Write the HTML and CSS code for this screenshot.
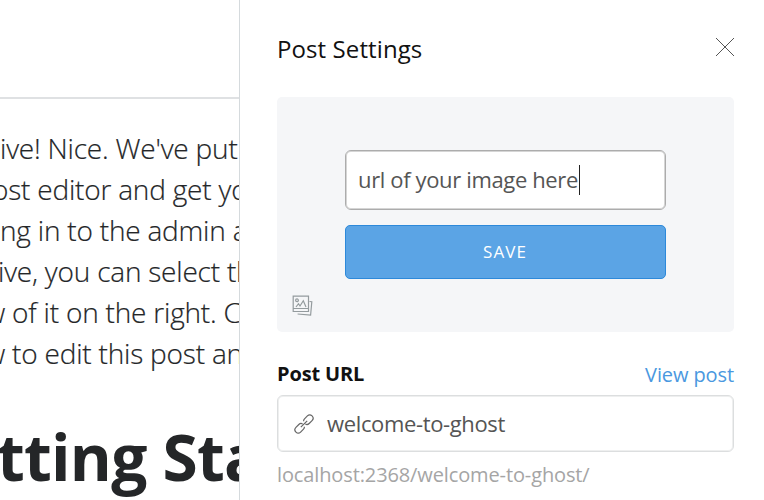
FILE: index.html
```html
<!DOCTYPE html>
<html lang="en">
<head>
<meta charset="utf-8">
<title>Post Settings</title>
<link rel="stylesheet" href="styles.css">
</head>
<body>
<main class="editor">
  <header class="editor-bar"></header>
  <article class="preview">
    <p class="copy">
      <span class="line line-a">ive! Nice. We've put</span>
      <span class="line line-b">ost editor and get yo</span>
      <span class="line line-c">ng in to the admin a</span>
      <span class="line line-d">ive, you can select th</span>
      <span class="line line-e">w of it on the right. C</span>
      <span class="line line-f">w to edit this post an</span>
    </p>
    <h1 class="heading">tting Sta</h1>
  </article>
</main>
<aside class="panel">
  <header class="panel-head">
    <h2 class="title">Post Settings</h2>
    <svg class="close" viewBox="0 0 20 20"><path d="M1 1L19 19M19 1L1 19"/></svg>
  </header>
  <section class="uploader">
    <div class="url-input"><span class="url-text">url of your image here</span><span class="caret"></span></div>
    <button class="save">SAVE</button>
    <svg class="image-icon" viewBox="0 0 22 22"><path d="M1.2 1.2h15.3v15.3H1.2zM1.2 13.5h15.3M4 12l2.5-3.3L8 11l3.3-5.3L14 12M17.500 6.500l2.300.2-1.200 13.500-13-1.200"/><circle cx="5" cy="5.3" r="1.4"/></svg>
  </section>
  <div class="label-row"><label class="label">Post URL</label><a class="view">View post</a></div>
  <div class="slug">
    <svg class="link-icon" viewBox="0 0 20 20"><g transform="rotate(-45 10 10)"><path d="M8.4 12.2a3.2 3.2 0 0 1-2.4 1.1H1.9a3.3 3.3 0 0 1 0-6.6H6a3.3 3.3 0 0 1 3.1 2.2M11.6 7.8A3.2 3.2 0 0 1 14 6.7h4.1a3.3 3.3 0 0 1 0 6.6H14a3.3 3.3 0 0 1-3.1-2.2M5.5 10h9"/></g></svg>
    <span class="slug-text">welcome-to-ghost</span>
  </div>
  <p class="hint">localhost:2368/welcome-to-ghost/</p>
</aside>
</body>
</html>
```
FILE: styles.css
```css
* { box-sizing: border-box; }
body {
  margin: 0;
  width: 764px;
  height: 500px;
  display: flex;
  overflow: hidden;
  background: #fff;
  font-family: "Open Sans", sans-serif;
}
h1, h2, p { margin: 0; font-weight: 400; }
svg { fill: none; display: block; overflow: visible; }
.editor { width: 239px; height: 500px; overflow: hidden; flex: none; }
.editor-bar { height: 99px; border-bottom: 2px solid #dfe1e3; }
.preview { padding-top: 29px; white-space: nowrap; color: #242628; }
.copy { font-size: 28px; line-height: 41px; font-weight: 300; letter-spacing: -0.2px; -webkit-text-stroke: 0.2px #242628; }
.line { display: block; }
.line-a { margin-left: 0; }
.line-b { margin-left: -8px; }
.line-c { margin-left: 0; }
.line-d { margin-left: -2px; }
.line-e { margin-left: -15px; }
.line-f { margin-left: -15px; }
.heading { margin: 39px 0 0 -3px; font-size: 64px; line-height: 88px; font-weight: 700; letter-spacing: -0.75px; }
.panel {
  width: 525px;
  height: 500px;
  flex: none;
  padding: 0 30px 0 37px;
  border-left: 1px solid #d5dadd;
}
.panel-head { height: 97px; display: flex; justify-content: space-between; }
.title { padding-top: 32px; font-size: 24px; line-height: 33px; color: #111; letter-spacing: 0.1px; }
.close { width: 20px; height: 20px; margin: 37px -1px 0 0; stroke: #555; stroke-width: 1; }
.uploader {
  height: 235px;
  padding: 53px 68px 0;
  border-radius: 5px;
  background: #f5f6f8;
}
.url-input {
  height: 60px;
  display: flex;
  align-items: center;
  padding: 0 0 1px 12px;
  border: 1px solid #acacac;
  border-radius: 6px;
  box-shadow: inset 0 0 0 1px #d5d5d5;
  background: #fff;
  font-size: 22px;
  letter-spacing: -0.36px;
  color: #555;
}
.url-text { margin-top: -1px; }
.caret { width: 1px; height: 30px; margin-left: 1px; background: #222; }
.save {
  display: block;
  width: 100%;
  height: 54px;
  margin-top: 15px;
  padding: 0 1px 0 0;
  border: 1px solid #2d89da;
  border-radius: 5px;
  background: #5ba4e5;
  color: #fff;
  font: 400 17px/24px "Open Sans", sans-serif;
  letter-spacing: 1.1px;
}
.image-icon { width: 22px; height: 22px; margin: 16px 0 0 -53px; stroke: #949b9e; stroke-width: 1.2; }
.label-row { height: 63px; display: flex; justify-content: space-between; }
.label { padding-top: 28px; font-size: 20px; line-height: 27px; font-weight: 700; color: #111; letter-spacing: -0.15px; }
.view { padding-top: 29px; font-size: 20px; line-height: 28px; color: #4a98e0; letter-spacing: -0.1px; }
.slug {
  height: 57px;
  display: flex;
  align-items: center;
  padding-left: 16px;
  border: 1px solid #dcdedf;
  border-radius: 6px;
  box-shadow: inset 0 0 0 1px #eeefef;
}
.link-icon { width: 20px; height: 20px; stroke: #666; stroke-width: 1.2; }
.slug-text { margin: -2px 0 0 13px; font-size: 22px; color: #555; letter-spacing: -0.36px; }
.hint { padding-top: 9px; font-size: 20px; line-height: 28px; color: #a5a5a5; letter-spacing: -0.12px; }
```
